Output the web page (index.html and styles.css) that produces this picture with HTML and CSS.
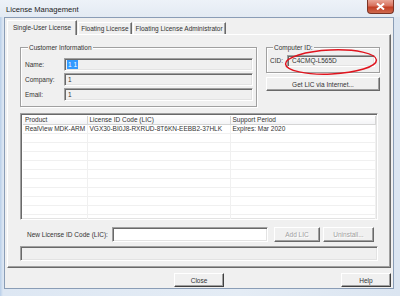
FILE: index.html
```html
<!DOCTYPE html>
<html>
<head>
<meta charset="utf-8">
<link rel="stylesheet" href="styles.css">
</head>
<body>
<div class="window">
  <div class="titlebar">
    <span class="title">License Management</span>
    <span class="close-btn"><svg width="9" height="7" viewBox="0 0 9 7"><path d="M1 0.5 L8 6.5 M8 0.5 L1 6.5" stroke="#fff" stroke-width="2"/></svg></span>
  </div>
  <div class="client">
    <div class="tabs">
      <div class="tab active">Single-User License</div>
      <div class="tab">Floating License</div>
      <div class="tab">Floating License Administrator</div>
    </div>
    <div class="panel">
      <div class="top-row">
        <div class="group customer">
          <div class="group-title">Customer Information</div>
          <div class="form">
            <span class="lbl">Name:</span><div class="field"><span class="sel">1 1</span></div>
            <span class="lbl">Company:</span><div class="field">1</div>
            <span class="lbl">Email:</span><div class="field">1</div>
          </div>
        </div>
        <div class="computer-col">
          <div class="group computer">
            <div class="group-title">Computer ID:</div>
            <div class="cid-row">
              <span class="lbl cid-lbl">CID:</span>
              <div class="field cid">C4CMQ-L565D</div>
            </div>
            <svg class="ellipse" width="96" height="28" viewBox="0 0 96 28"><ellipse cx="48" cy="14" rx="45.5" ry="12" fill="none" stroke="#e0141e" stroke-width="1.5" transform="rotate(-2.5 48 14)"/></svg>
          </div>
          <button class="btn wide">Get LIC via Internet...</button>
        </div>
      </div>
      <div class="list">
        <table>
          <colgroup><col class="c1"><col class="c2"><col></colgroup>
          <thead><tr><th>Product</th><th>License ID Code (LIC)</th><th>Support Period</th></tr></thead>
          <tbody>
            <tr><td>RealView MDK-ARM</td><td>VGX30-BI0J8-RXRUD-8T6KN-EEBB2-37HLK</td><td>Expires: Mar 2020</td></tr>
            <tr><td></td><td></td><td></td></tr>
            <tr><td></td><td></td><td></td></tr>
            <tr><td></td><td></td><td></td></tr>
            <tr><td></td><td></td><td></td></tr>
            <tr><td></td><td></td><td></td></tr>
            <tr><td></td><td></td><td></td></tr>
            <tr><td></td><td></td><td></td></tr>
            <tr><td></td><td></td><td></td></tr>
            <tr><td></td><td></td><td></td></tr>
            <tr><td></td><td></td><td></td></tr>
          </tbody>
        </table>
      </div>
      <div class="new-row">
        <span class="new-lbl">New License ID Code (LIC):</span>
        <div class="input"></div>
        <button class="btn disabled add">Add LIC</button>
        <button class="btn disabled">Uninstall...</button>
      </div>
      <div class="status"></div>
    </div>
    <div class="footer">
      <button class="btn dlg close">Close</button>
      <button class="btn dlg help">Help</button>
    </div>
  </div>
</div>
</body>
</html>
```
FILE: styles.css
```css
* { box-sizing: border-box; }
html, body { margin: 0; padding: 0; }
body {
  width: 400px;
  height: 296px;
  overflow: hidden;
  background: #d9e4f1;
  font-family: "Liberation Sans", Arial, sans-serif;
  font-size: 6.5px;
  color: #333;
}
.window {
  display: flex;
  flex-direction: column;
  height: 296px;
  background: linear-gradient(90deg, #b9cfe9 0, #dde7f3 3px, #e4ecf5 60%, #dbe5f1 100%);
}
.titlebar {
  height: 17px;
  display: flex;
  justify-content: space-between;
  align-items: flex-start;
  padding: 0 6px 0 6px;
  background: linear-gradient(#edf2f8, #e3eaf3);
}
.title {
  font-size: 7.6px;
  line-height: 19px;
  color: #222;
}
.close-btn {
  width: 27px;
  height: 14px;
  display: flex;
  align-items: center;
  justify-content: center;
  background: linear-gradient(#e9a596 0, #d7705c 45%, #c23f25 55%, #cf6a4e 100%);
  border: 1px solid #7a3426;
  border-top: none;
  border-radius: 0 0 4px 4px;
}
.client {
  margin: 0 6px 0 4px;
  height: 272px;
  background: #f0f0f0;
  border: 1px solid #8a9db6;
  padding: 2px 2px 0 2px;
  display: flex;
  flex-direction: column;
}
.tabs {
  height: 14px;
  display: flex;
  align-items: flex-end;
  position: relative;
  z-index: 1;
}
.tab {
  height: 12px;
  padding: 0 2px;
  line-height: 11px;
  background: #f0f0f0;
  border-top: 1px solid #fff;
  border-left: 1px solid #fff;
  border-right: 1px solid #696969;
  margin-right: 1px;
  box-shadow: inset -1px 0 0 #a0a0a0;
}
.tab.active {
  height: 15px;
  margin-bottom: -1px;
  padding: 0 5px;
  line-height: 13px;
}
.panel {
  height: 234px;
  border: 1px solid;
  border-color: #fff #696969 #696969 #fff;
  box-shadow: inset -1px -1px 0 #a0a0a0;
  padding: 12px 10px 6px 12px;
  display: flex;
  flex-direction: column;
}
.top-row {
  display: flex;
  gap: 9px;
  align-items: flex-start;
}
.group {
  border: 1px solid #a0a0a0;
  box-shadow: 1px 1px 0 #fff, inset 1px 1px 0 #fff;
  display: flex;
  flex-direction: column;
  position: relative;
}
.group-title {
  align-self: flex-start;
  margin: -4px 0 0 3px;
  padding: 0 1px;
  line-height: 8px;
  height: 8px;
  background: #f0f0f0;
}
.customer {
  width: 237px;
  height: 60px;
  padding: 0 3px 0 4px;
}
.form {
  margin-top: 6px;
  display: grid;
  grid-template-columns: 39px 1fr;
  grid-auto-rows: 13px;
  row-gap: 2px;
}
.lbl {
  line-height: 13px;
}
.field {
  height: 13px;
  border: 1px solid;
  border-color: #a0a0a0 #fff #fff #a0a0a0;
  box-shadow: inset 1px 1px 0 #696969, inset -1px -1px 0 #e3e3e3;
  background: #f0f0f0;
  padding-left: 3px;
  line-height: 11px;
}
.sel {
  background: #3399ff;
  color: #fff;
  padding: 0 1px;
  display: inline-block;
  line-height: 9px;
  margin-left: -1px;
}
.computer-col {
  width: 114px;
  display: flex;
  flex-direction: column;
  gap: 4px;
}
.computer {
  height: 26px;
  padding: 0 4px 0 3px;
}
.cid-row {
  margin-top: 3px;
  display: flex;
}
.cid-lbl {
  width: 17px;
  line-height: 12px;
}
.cid {
  flex: 1;
  height: 12px;
  line-height: 10px;
  padding-left: 4px;
}
.ellipse {
  position: absolute;
  left: 16px;
  top: 0px;
}
.btn {
  font-family: inherit;
  font-size: 6.5px;
  color: #333;
  background: #f0f0f0;
  border: 1px solid;
  border-color: #fff #696969 #696969 #fff;
  box-shadow: inset -1px -1px 0 #a0a0a0;
  padding: 0;
  margin: 0;
  height: 14px;
  line-height: 11px;
}
.wide {
  width: 114px;
}
.btn.disabled {
  color: #a0a0a0;
  text-shadow: 1px 1px 0 #fff;
}
.list {
  margin-top: 6px;
  margin-right: 2px;
  height: 107px;
  background: #fff;
  border: 1px solid;
  border-color: #a0a0a0 #fff #fff #a0a0a0;
  box-shadow: inset 1px 1px 0 #696969, inset -1px -1px 0 #e3e3e3;
  padding: 2px 1px 1px 2px;
  overflow: hidden;
}
table {
  width: 100%;
  border-collapse: collapse;
  table-layout: fixed;
}
col.c1 { width: 64px; }
col.c2 { width: 143px; }
th {
  height: 8px;
  font-weight: normal;
  text-align: left;
  padding: 0 0 0 2px;
  line-height: 8px;
  background: linear-gradient(#fff, #f3f4f6);
  border-right: 1px solid #d5d5d5;
  border-bottom: 1px solid #d5d5d5;
  white-space: nowrap;
}
td {
  height: 9px;
  padding: 0 0 0 2px;
  line-height: 8px;
  border-right: 1px solid #f0f0f0;
  border-bottom: 1px solid #f0f0f0;
  white-space: nowrap;
  overflow: hidden;
}
.new-row {
  margin-top: 7px;
  height: 15px;
  display: grid;
  grid-template-columns: 92px 156px 52px 51px;
  column-gap: 0;
}
.new-lbl {
  padding-left: 7px;
  line-height: 15px;
}
.input {
  height: 15px;
  background: #fff;
  border: 1px solid;
  border-color: #a0a0a0 #fff #fff #a0a0a0;
  box-shadow: inset 1px 1px 0 #696969, inset -1px -1px 0 #e3e3e3;
}
.new-row .btn {
  height: 15px;
}
.add {
  margin-left: 6px;
}
.new-row .btn:last-child {
  margin-left: 3px;
  width: 51px;
}
.status {
  margin-top: 4px;
  margin-right: 2px;
  height: 15px;
  border: 1px solid;
  border-color: #a0a0a0 #fff #fff #a0a0a0;
  box-shadow: inset 1px 1px 0 #696969, inset -1px -1px 0 #e3e3e3;
}
.footer {
  margin-top: 5px;
  display: grid;
  grid-template-columns: 1fr auto 1fr;
}
.dlg {
  width: 50px;
  height: 14px;
  border-color: #fff #404040 #404040 #fff;
}
.close {
  grid-column: 2;
}
.help {
  grid-column: 3;
  justify-self: end;
}
```
